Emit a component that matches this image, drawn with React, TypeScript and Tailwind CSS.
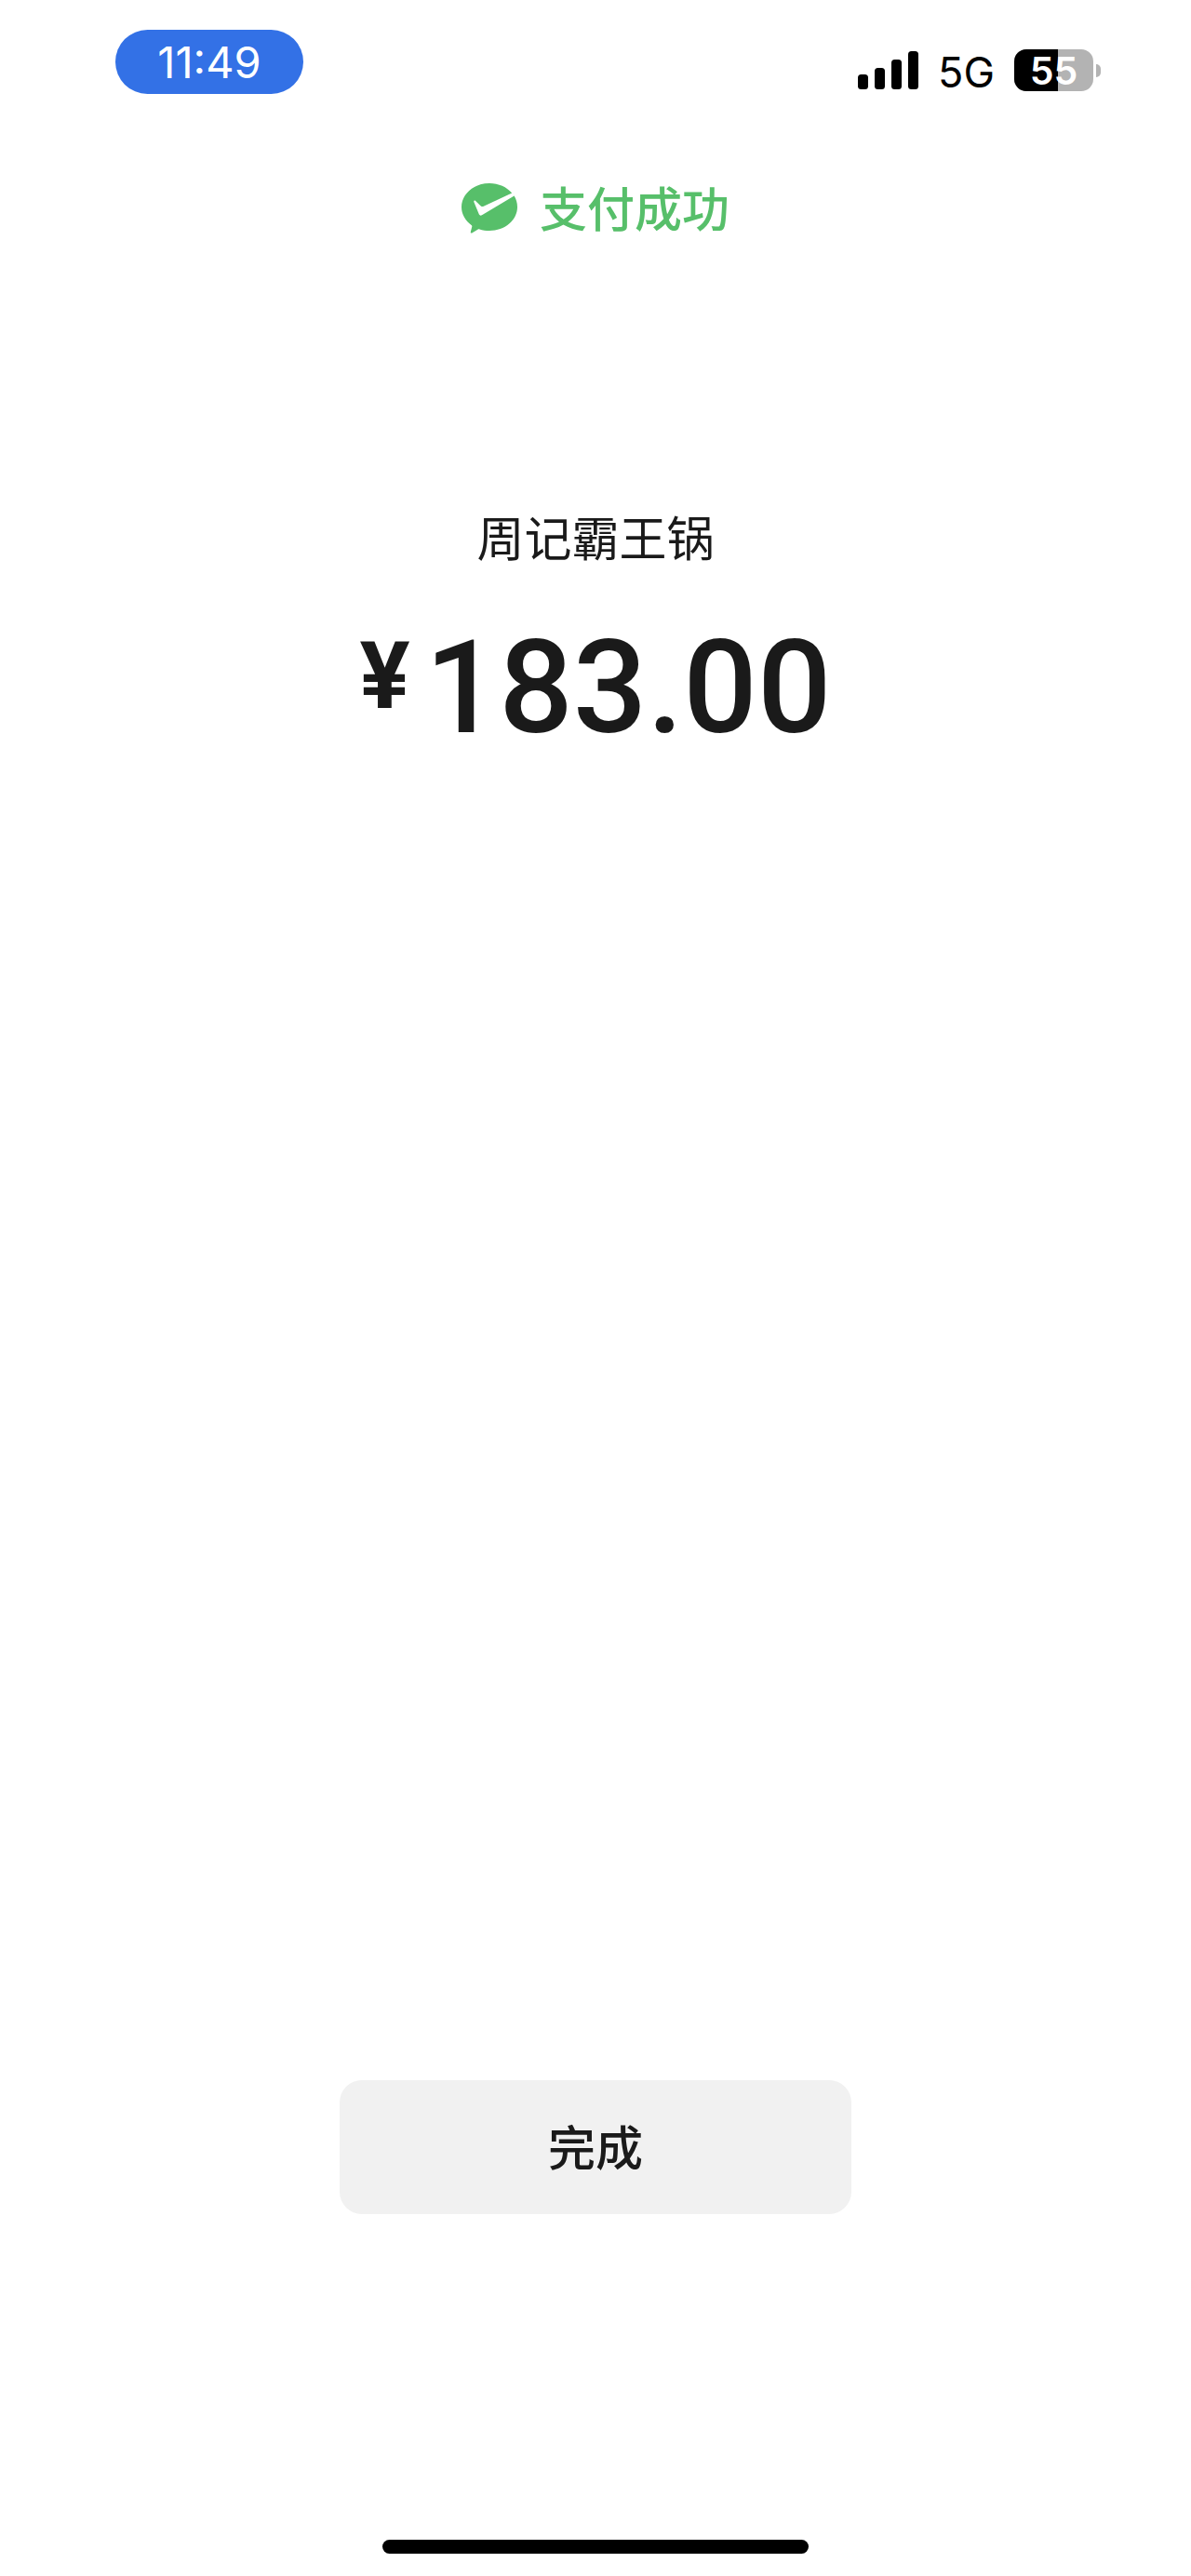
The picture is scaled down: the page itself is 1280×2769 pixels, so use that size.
const PAYMENT = {
  merchant: '周记霸王锅',
  currency: '¥',
  amount: '183.00',
};

const BATTERY_LEVEL = 55;

function SignalIcon() {
  return (
    <svg viewBox="0 0 65 41" className="h-[41px] w-[65px]" fill="currentColor" aria-hidden="true">
      <rect x="0" y="25" width="11" height="16" rx="3.5" />
      <rect x="18" y="18" width="11" height="23" rx="3.5" />
      <rect x="36" y="9" width="11" height="32" rx="3.5" />
      <rect x="54" y="0" width="11" height="41" rx="3.5" />
    </svg>
  );
}

function PaySuccessIcon() {
  return (
    <svg viewBox="0 0 60 54" className="h-[54px] w-[60px]" aria-hidden="true">
      <path
        fill="currentColor"
        d="M30 0C13.4 0 0 11.4 0 25.5c0 7.8 4.1 14.7 10.6 19.4.5.4.8.9.7 1.5L9.8 52.3c-.2 1 .5 1.6 1.4 1.1l6.6-3.8c.5-.3 1-.3 1.6-.1 3.3 1 6.900 1.500 10.600 1.500 16.600 0 30-11.400 30-25.500 0-4.300-1.200-8.300-3.400-11.900L21.900 34.200c-1.300.8-2.300.5-3-.7l-5.400-13c-.7-1.600.3-2.400 1.600-1.500l5.700 5.400c1 .8 1.800.9 2.900.4L54.200 10.500C48.700 4.100 39.900 0 30 0z"
      />
    </svg>
  );
}

function Battery({ level }: { level: number }) {
  return (
    <div className="flex items-center gap-[3px]">
      <div className="relative flex h-[45px] w-[85px] items-center justify-center rounded-[13px] bg-[#b3b3b3]">
        <div className="absolute inset-y-0 left-0 rounded-l-[13px] bg-black" style={{ width: `${level}%` }} />
        <span className="relative text-[41px] leading-[50px] font-semibold text-white">{level}</span>
      </div>
      <div className="h-[14px] w-[5px] rounded-r-full bg-[#b3b3b3]" />
    </div>
  );
}

function StatusBar() {
  return (
    <header className="flex items-start justify-between pt-8 pr-[97px] pl-[124px] font-['Inter',sans-serif]">
      <div className="flex h-[69px] w-[202px] items-center justify-center rounded-full bg-[#3371e6] pt-px text-[47px] leading-[56px] text-white">
        11:49
      </div>
      <div className="mt-[21px] flex h-[45px] items-center gap-[21px] text-black">
        <SignalIcon />
        <span className="pt-1 text-[45px] leading-[56px]">5G</span>
        <Battery level={BATTERY_LEVEL} />
      </div>
    </header>
  );
}

export default function App() {
  return (
    <div className="flex min-h-screen flex-col bg-white font-['Noto_Sans_CJK_SC',sans-serif] text-[#1a1a1a]">
      <StatusBar />

      <main className="flex flex-1 flex-col items-center">
        <div className="mt-[85px] flex items-center gap-6 text-[#57bf6a]">
          <PaySuccessIcon />
          <h1 className="pb-1 text-[51px] leading-[72px] font-medium">支付成功</h1>
        </div>

        <p className="mt-[278px] text-[51px] leading-[72px]">{PAYMENT.merchant}</p>
        <p className="mt-[43px] flex items-start gap-4 font-['Roboto',sans-serif]">
          <span className="text-[101px] leading-[144px] font-bold">{PAYMENT.currency}</span>
          <span className="text-[140px] leading-[168px] font-medium">{PAYMENT.amount}</span>
        </p>

        <button
          type="button"
          className="mt-auto h-36 w-[550px] rounded-3xl bg-[#f1f1f1] pb-1 text-[51px] leading-[72px] font-medium"
        >
          完成
        </button>
      </main>

      <div className="mx-auto mt-[350px] mb-6 h-[15px] w-[458px] rounded-full bg-black" />
    </div>
  );
}
